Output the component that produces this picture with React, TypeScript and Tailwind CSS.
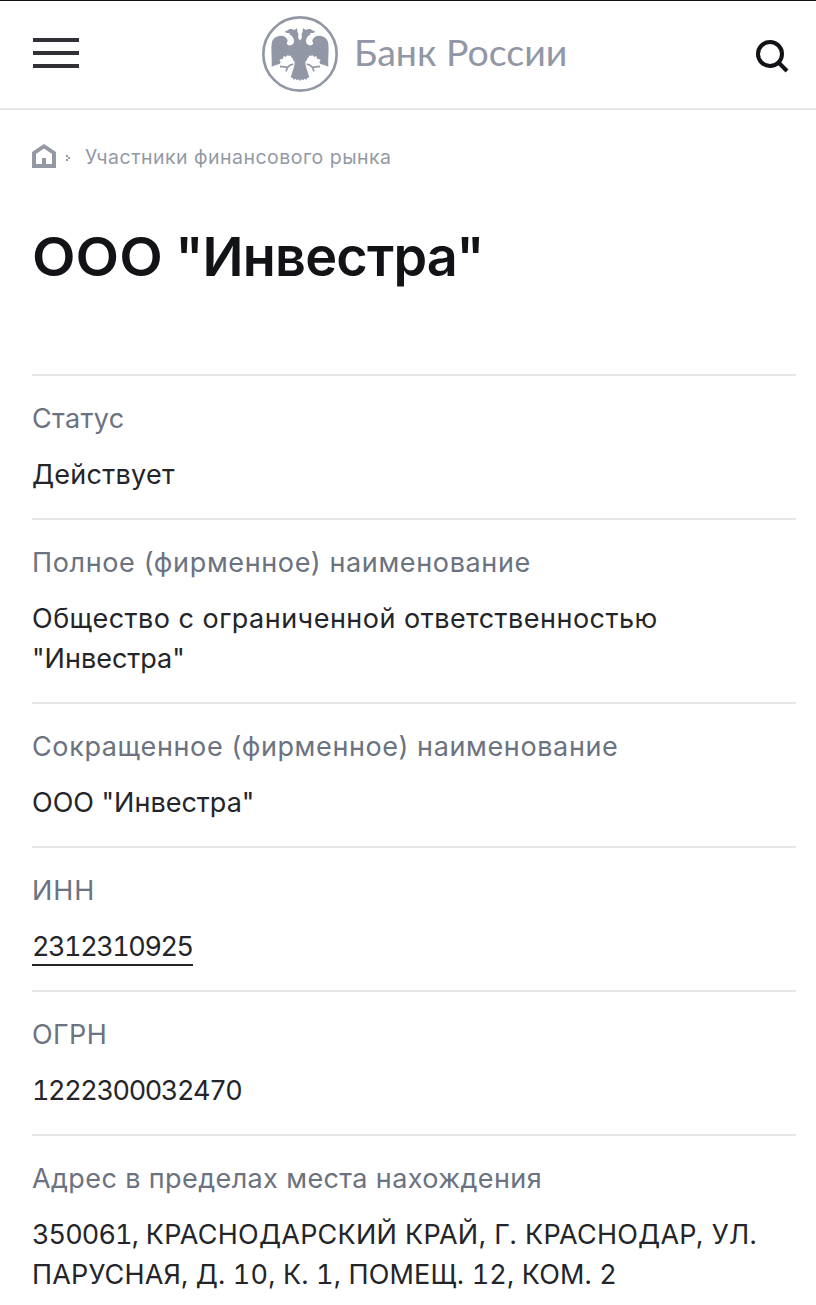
type Line = { text: string; className: string; prefix?: string };

type Row = {
  label: Line;
  lines: Line[];
  link?: boolean;
};

const rows: Row[] = [
  {
    label: { text: "Статус", className: "tracking-[0.35px]" },
    lines: [{ text: "Действует", className: "tracking-[0.25px]" }],
  },
  {
    label: { text: "Полное (фирменное) наименование", className: "tracking-[0.63px]" },
    lines: [
      { text: "Общество с ограниченной ответственностью", className: "tracking-[0.48px]" },
      { text: '"Инвестра"', className: "" },
    ],
  },
  {
    label: { text: "Сокращенное (фирменное) наименование", className: "tracking-[0.62px]" },
    lines: [{ text: 'ООО "Инвестра"', className: "" }],
  },
  {
    label: { text: "ИНН", className: "tracking-[0.9px]" },
    lines: [{ text: "2312310925", className: "tabular-nums tracking-[-1.45px]" }],
    link: true,
  },
  {
    label: { text: "ОГРН", className: "tracking-[0.4px]" },
    lines: [{ text: "1222300032470", className: "tabular-nums tracking-[-1.4px]" }],
  },
  {
    label: { text: "Адрес в пределах места нахождения", className: "tracking-[0.39px]" },
    lines: [
      {
        prefix: "350061,",
        text: " КРАСНОДАРСКИЙ КРАЙ, Г. КРАСНОДАР, УЛ.",
        className: "tracking-[0.25px]",
      },
      { text: "ПАРУСНАЯ, Д. 10, К. 1, ПОМЕЩ. 12, КОМ. 2", className: "tabular-nums tracking-[0.15px]" },
    ],
  },
];

function EagleHalf() {
  return (
    <g>
      <path d="M151 123 C146 117 143 113 145 106 C147 100 140 96 142 91 L141 85 L133 90 C126 85 117 86 113 91 L103 96 L112 99 L120 100 L119 104 C126 106 132 114 132 124 C132 133 124 138 116 136 C110 134 109 129 113 124 C113 114 103 106 92 107 C76 109 66 117 65 132 C63 155 66 170 65 201 C73 195 82 194 89 192 L92 186 L88 181 L93 177 L98 178 L101 168 L107 171 L112 166 L118 168 L121 166 L125 173 L128 175 L129 181 L133 183 L134 192 L131 204 L122 232 L128 234 L131 239 L137 236 L140 241 L145 238 L151 243 Z" />
      <path d="M130 192 L120 196 L112 202 L90 199 M113 201 L108 214" fill="none" stroke="currentColor" strokeWidth="5" />
    </g>
  );
}

function Emblem() {
  return (
    <svg className="size-[76px] text-[#9297a5]" viewBox="36 48 228 228" fill="currentColor">
      <circle cx="150" cy="162" r="110" fill="none" stroke="currentColor" strokeWidth="8" />
      <EagleHalf />
      <g transform="translate(300 0) scale(-1 1)">
        <EagleHalf />
      </g>
    </svg>
  );
}

function Header() {
  return (
    <header className="flex h-[110px] items-start border-t border-b-2 border-t-[#111] border-b-[#e7e7e7]">
      <button className="mt-[37px] ml-[33px] flex w-[46px] flex-col gap-[9px]" aria-label="Меню">
        <span className="h-1 w-full bg-[#303136]" />
        <span className="h-1 w-full bg-[#303136]" />
        <span className="h-1 w-full bg-[#303136]" />
      </button>
      <a className="mt-[15px] ml-[183px] flex items-center">
        <Emblem />
        <span className="mb-1 ml-4 w-[215px] whitespace-nowrap font-['Lato',sans-serif] text-[37.5px] leading-[72px] text-[#9297a5]">
          Банк России
        </span>
      </a>
      <button className="mt-[37px] mr-6 ml-auto" aria-label="Поиск">
        <svg className="size-9" viewBox="0 0 36 36" fill="none" stroke="#121316" strokeWidth="4">
          <circle cx="14" cy="16" r="12" />
          <path d="M22.5 24.5 L31 33" />
        </svg>
      </button>
    </header>
  );
}

function Breadcrumbs() {
  return (
    <nav className="flex h-6 items-center text-[#9399a4]">
      <svg className="size-6" viewBox="0 0 24 24" fill="currentColor" fillRule="evenodd">
        <path d="M12 0 L24 8 V24 H0 V8 Z M12 4.5 L4 10 V20 H10 V14 H14 V20 H20 V10 Z" />
      </svg>
      <svg className="ml-2.5 h-6 w-4" viewBox="0 0 16 24" fill="currentColor" shapeRendering="crispEdges">
        <path d="M0 11h2v2h-2z M2 13h2v2h-2z M0 15h2v2h-2z" />
      </svg>
      <span className="mt-0.5 ml-[3px] text-[19.5px] leading-6 tracking-[0.48px]">Участники финансового рынка</span>
    </nav>
  );
}

export default function App() {
  return (
    <div className="h-[1305px] overflow-hidden bg-white font-['Inter',sans-serif] text-[#24252a]">
      <Header />
      <main className="pt-[34px] pr-5 pl-8">
        <Breadcrumbs />
        <h1 className="mt-[58px] mb-[86px] text-[54px] leading-[62px] font-semibold whitespace-nowrap text-[#121316]">
          <span className="mr-1.5 inline-block origin-left scale-x-105">ООО</span>
          <span className="tracking-[-1px]"> </span>
          <span className="tracking-[-0.8px]">"Инвестра"</span>
        </h1>
        {rows.map(({ label, lines, link }) => (
          <section
            key={label.text}
            className="border-t-2 border-[#e7e7e7] pt-[23px] pb-[23px] text-[27px] leading-10 whitespace-nowrap"
          >
            <div className="mb-4 text-[#6b7280]">
              <span className={label.className}>{label.text}</span>
            </div>
            {lines.map(({ text, className, prefix }) => (
              <div key={text} className="h-10">
                {prefix && <span className="tabular-nums tracking-[-0.9px]">{prefix}</span>}
                {link ? (
                  <a className={`inline-block h-[39px] border-b-2 border-[#24252a] ${className}`}>{text}</a>
                ) : (
                  <span className={className}>{text}</span>
                )}
              </div>
            ))}
          </section>
        ))}
      </main>
    </div>
  );
}
